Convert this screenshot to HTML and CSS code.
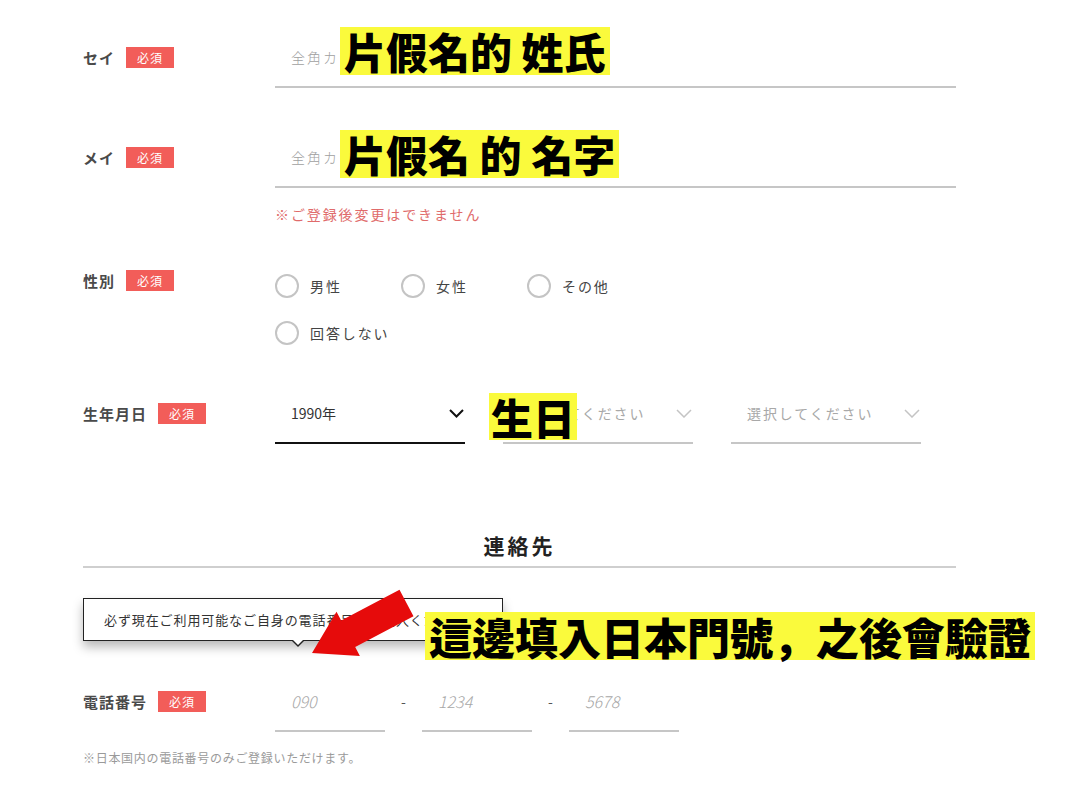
FILE: index.html
```html
<!DOCTYPE html>
<html lang="ja">
<head>
<meta charset="utf-8">
<title>会員登録</title>
<link rel="stylesheet" href="styles.css">
</head>
<body>
<main class="page">
  <div class="row">
    <div class="label-col"><span class="label">セイ</span><span class="badge">必須</span></div>
    <input class="text-input" type="text" placeholder="全角カナ">
  </div>

  <div class="row row-gap">
    <div class="label-col"><span class="label">メイ</span><span class="badge">必須</span></div>
    <input class="text-input" type="text" placeholder="全角カナ">
  </div>
  <p class="warn">※ご登録後変更はできません</p>

  <div class="row row-gender">
    <div class="label-col label-col-short"><span class="label">性別</span><span class="badge">必須</span></div>
    <div class="radios">
      <label class="radio"><span class="circle"></span>男性</label>
      <label class="radio"><span class="circle"></span>女性</label>
      <label class="radio"><span class="circle"></span>その他</label>
      <label class="radio"><span class="circle"></span>回答しない</label>
    </div>
  </div>

  <div class="row row-birth">
    <div class="label-col"><span class="label">生年月日</span><span class="badge">必須</span></div>
    <div class="selects">
      <div class="select select-active"><span>1990年</span>
        <svg class="chev" width="15" height="9" viewBox="0 0 15 9"><polyline points="1,1 7.5,7.5 14,1" fill="none" stroke="#111" stroke-width="2"/></svg>
      </div>
      <div class="select"><span class="ph">選択してください</span>
        <svg class="chev" width="16" height="9" viewBox="0 0 16 9"><polyline points="1,1 8,8 15,1" fill="none" stroke="#c4c4c4" stroke-width="1.5"/></svg>
      </div>
      <div class="select"><span class="ph">選択してください</span>
        <svg class="chev" width="16" height="9" viewBox="0 0 16 9"><polyline points="1,1 8,8 15,1" fill="none" stroke="#c4c4c4" stroke-width="1.5"/></svg>
      </div>
    </div>
  </div>

  <h2 class="section-title">連絡先</h2>

  <div class="tooltip">必ず現在ご利用可能なご自身の電話番号をご記入ください</div>

  <div class="row row-phone">
    <div class="label-col"><span class="label">電話番号</span><span class="badge">必須</span></div>
    <div class="phone">
      <input class="phone-input" type="text" placeholder="090">
      <span class="sep">-</span>
      <input class="phone-input" type="text" placeholder="1234">
      <span class="sep">-</span>
      <input class="phone-input" type="text" placeholder="5678">
    </div>
  </div>
  <p class="note">※日本国内の電話番号のみご登録いただけます。</p>
</main>

<div class="annotations">
  <div class="hl hl-1">片假名的 姓氏</div>
  <div class="hl hl-2">片假名 的 名字</div>
  <div class="hl hl-3">生日</div>
  <div class="hl hl-4">這邊填入日本門號，之後會驗證</div>
  <svg class="arrow" width="1070" height="785" viewBox="0 0 1070 785">
    <polygon points="399.5,589.7 341.2,620.5 336.5,611.7 312,653 359.9,655.9 355.2,647.1 413.5,616.3" fill="#e60b0b"/>
  </svg>
</div>
</body>
</html>
```

FILE: styles.css
```css
* { box-sizing: border-box; }

html, body {
  margin: 0;
  padding: 0;
  background: #fff;
}

body {
  position: relative;
  width: 1070px;
  height: 785px;
  overflow: hidden;
  font-family: "Noto Sans CJK JP", "Noto Sans", sans-serif;
  color: #333;
}

.page {
  width: 873px;
  margin-left: 83px;
  padding-top: 28px;
}

.row {
  display: flex;
  align-items: flex-start;
}

.row-gap { margin-top: 40px; }

.label-col {
  width: 192px;
  flex: none;
  height: 58px;
  display: flex;
  align-items: center;
  gap: 11px;
}

.label-col-short { height: 36px; }

.label {
  font-size: 15px;
  font-weight: 700;
  letter-spacing: 1px;
  color: #4a4a4a;
}

.badge {
  display: inline-block;
  width: 48px;
  height: 21px;
  line-height: 21px;
  text-align: center;
  background: #f25d59;
  color: #fff;
  font-size: 12px;
  letter-spacing: 1px;
}

.text-input {
  width: 681px;
  height: 60px;
  border: none;
  border-bottom: 2px solid #c6c6c6;
  padding: 0 16px;
  font-family: inherit;
  font-size: 14px;
  letter-spacing: 2px;
  color: #333;
  background: transparent;
  outline: none;
}

.text-input::placeholder {
  color: #a0a0a0;
  font-weight: 300;
}

.warn {
  margin: 16px 0 0 192px;
  font-size: 14px;
  line-height: 20px;
  letter-spacing: 1.9px;
  color: #e06b6b;
}

.row-gender { margin-top: 38px; }

.radios {
  padding-top: 12px;
  display: grid;
  grid-template-columns: repeat(3, 126px);
  row-gap: 23px;
}

.radio {
  display: flex;
  align-items: center;
  gap: 11px;
  height: 24px;
  font-size: 14px;
  letter-spacing: 1.9px;
  color: #444;
}

.circle {
  width: 24px;
  height: 24px;
  border: 2.5px solid #c4c4c4;
  border-radius: 50%;
  flex: none;
}

.row-birth { margin-top: 39px; }

.selects {
  display: flex;
  gap: 38px;
}

.select {
  width: 190px;
  height: 60px;
  border-bottom: 2px solid #c6c6c6;
  padding: 0 1px 0 16px;
  display: flex;
  align-items: center;
  justify-content: space-between;
  font-size: 14px;
  color: #333;
}

.select-active { border-bottom-color: #111; }

.select .ph {
  color: #a8a8a8;
  letter-spacing: 1.9px;
}

.chev { flex: none; }

.section-title {
  margin: 86px 0 0;
  padding-bottom: 6px;
  border-bottom: 2px solid #cfcfcf;
  text-align: center;
  font-size: 21px;
  line-height: 30px;
  letter-spacing: 3px;
  font-weight: 700;
  color: #222;
}

.tooltip {
  position: relative;
  margin-top: 30px;
  width: 420px;
  height: 43px;
  border: 1px solid #222;
  padding: 0 20px;
  line-height: 41px;
  font-size: 13px;
  letter-spacing: 0.9px;
  color: #333;
  background: #fff;
  white-space: nowrap;
  box-shadow: 0 6px 10px rgba(0, 0, 0, 0.28);
}

.tooltip::before {
  content: "";
  position: absolute;
  left: 207px;
  bottom: -7px;
  border-left: 7px solid transparent;
  border-right: 7px solid transparent;
  border-top: 7px solid #222;
}

.tooltip::after {
  content: "";
  position: absolute;
  left: 208px;
  bottom: -5px;
  border-left: 6px solid transparent;
  border-right: 6px solid transparent;
  border-top: 6px solid #fff;
}

.row-phone { margin-top: 31px; }

.phone {
  display: flex;
  align-items: flex-start;
}

.phone-input {
  width: 110px;
  height: 60px;
  border: none;
  border-bottom: 2px solid #c6c6c6;
  padding: 0 16px;
  font-family: inherit;
  font-size: 16px;
  color: #333;
  background: transparent;
  outline: none;
}

.phone-input::placeholder {
  color: #a8a8a8;
  font-style: italic;
  font-weight: 300;
}

.sep {
  width: 37px;
  line-height: 58px;
  text-align: center;
  font-size: 14px;
  color: #555;
}

.note {
  margin: 17px 0 0;
  font-size: 12px;
  line-height: 18px;
  letter-spacing: 0.7px;
  color: #9a9a9a;
}

/* annotation layer */
.annotations {
  position: absolute;
  left: 0;
  top: 0;
  width: 1070px;
  height: 785px;
  pointer-events: none;
}

.hl {
  position: absolute;
  background: #fafa3c;
  color: #000;
  font-family: "Noto Sans CJK TC", "Noto Sans CJK JP", sans-serif;
  font-weight: 900;
  font-size: 42px;
  line-height: 48px;
  padding: 0 4px;
  white-space: nowrap;
}

.hl-1 { left: 340px; top: 27px; }
.hl-2 { left: 340px; top: 130px; }
.hl-3 { left: 489px; top: 393px; padding: 0 2px; line-height: 47px; }
.hl-4 { left: 425px; top: 612px; font-size: 43px; }

.arrow {
  position: absolute;
  left: 0;
  top: 0;
}
```
